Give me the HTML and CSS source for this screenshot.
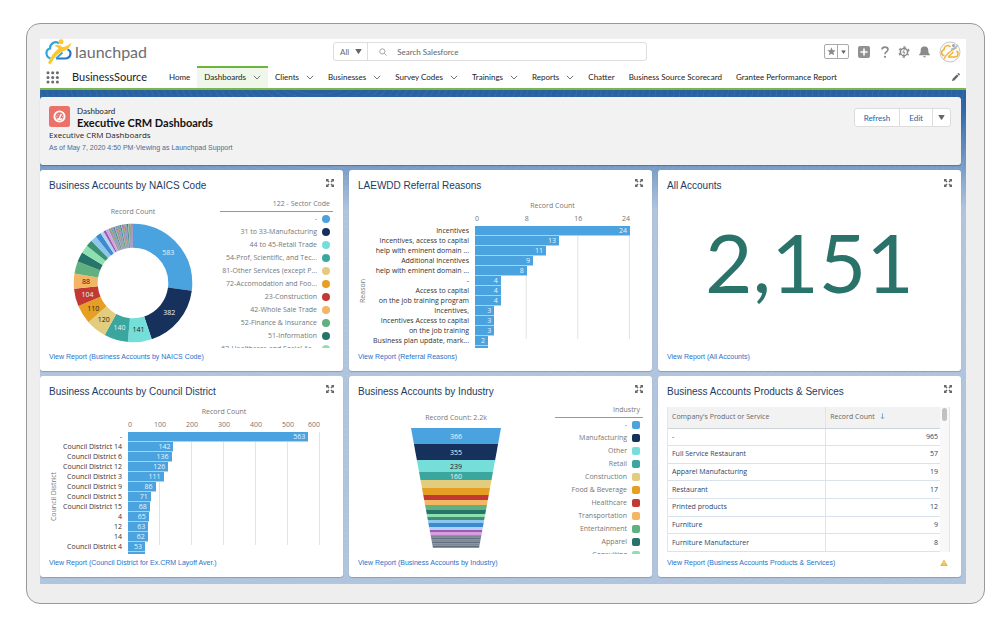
FILE: index.html
```html
<!DOCTYPE html>
<html lang="en">
<head>
<meta charset="utf-8">
<title>Executive CRM Dashboards</title>
<link rel="stylesheet" href="styles.css">
</head>
<body>
<svg class="defs" aria-hidden="true">
  <symbol id="chev" viewBox="0 0 8 5"><path d="M.8.8 4 4 7.2.8" fill="none" stroke="#777" stroke-width="1"/></symbol>
  <symbol id="caret" viewBox="0 0 8 6"><path d="M.8 0h6.4q.8 0 .4.7L4.6 5.3q-.6.8-1.2 0L.4.7Q0 0 .8 0z" fill="#666"/></symbol>
  <symbol id="expand" viewBox="0 0 8 8"><path d="M0 0h3L2.100.9 3.500 2.400 2.500 3.500.9 2 0 3zM8 0v3L7.100 2 5.500 3.500 4.500 2.400 5.900.9 5 0zM8 8H5l.9-.9L4.500 5.600l1-1.100L7.100 6 8 5zM0 8V5l.9 1 1.600-1.500 1 1.100L2.100 7.100 3 8z" fill="#666"/></symbol>
</svg>
<div class="device">
  <div class="screen">
    <header class="top">
      <div class="brand-bar">
        <a class="brand" href="#">
          <svg class="logo" viewBox="0 0 28 26" aria-hidden="true">
            <path d="M5.500 19.500C.2 18 .2 10.500 5 9.500 5 4 11 1.500 14 4.500" fill="none" stroke="#2fa4e0" stroke-width="2.200"/>
            <path d="M11 19.500h9c6.500-.3 7-7.500 2.500-9" fill="none" stroke="#2878be" stroke-width="2.200"/>
            <path d="M11 19.500 17.500 13.500" fill="none" stroke="#2fa4e0" stroke-width="1.800"/>
            <circle cx="16" cy="2.800" r="2.500" fill="#fdc82f"/>
            <path d="M9.500 6.500c3-1.500 5.500-.5 7.500 1.500 3 0 6-1.500 9.500-4.500-1 4.500-4 7.500-8.500 9C12.500 14.500 9 19 5.500 25.500L3 24C5.500 18 9 13 13.500 9.500c-1.500-1.500-2.500-2-4-3z" fill="#fdc82f"/>
          </svg>
          <span>launchpad</span>
        </a>
        <form class="search">
          <button class="scope" type="button">All <svg class="caret"><use href="#caret"/></svg></button>
          <label class="search-box">
            <svg class="lens" viewBox="0 0 9 9" aria-hidden="true"><circle cx="3.800" cy="3.800" r="2.900" fill="none" stroke="#999"/><path d="m6 6 2.500 2.500" stroke="#999"/></svg>
            <input type="text" placeholder="Search Salesforce" aria-label="Search Salesforce">
          </label>
        </form>
        <div class="tools">
          <div class="fav">
            <button type="button" aria-label="Favorite"><svg width="9" height="9" viewBox="0 0 10 10"><path d="m5 .3 1.300 3.200 3.400.2-2.600 2.200.8 3.400L5 7.500 2.100 9.300l.8-3.400L.3 3.700l3.400-.2z" fill="#8a8a8a"/></svg></button>
            <button type="button" aria-label="Favorites list"><svg width="5" height="4" viewBox="0 0 8 6"><use href="#caret"/></svg></button>
          </div>
          <button type="button" aria-label="Add"><svg width="12" height="12" viewBox="0 0 12 12"><rect width="12" height="12" rx="2" fill="#919191"/><path d="M6 2.500v7M2.500 6h7" stroke="#fff" stroke-width="1.600"/></svg></button>
          <button type="button" aria-label="Help"><svg width="10" height="12" viewBox="0 0 10 12"><path d="M3 3.500C3 .3 9 .3 9 3.500 9 5.500 6 5.800 6 8.200" fill="none" stroke="#8a8a8a" stroke-width="1.600"/><circle cx="6" cy="10.800" r="1.100" fill="#8a8a8a"/></svg></button>
          <button type="button" aria-label="Setup"><svg width="12" height="12" viewBox="0 0 12 12"><circle cx="6" cy="6" r="3.600" fill="none" stroke="#8a8a8a" stroke-width="1.500"/><circle cx="6" cy="6" r="4.900" fill="none" stroke="#8a8a8a" stroke-width="1.500" stroke-dasharray="2.300 2.830" stroke-dashoffset="1.150" transform="rotate(30 6 6)"/><path d="M6.500 3.500 4.800 6.300h2L5.700 8.500" fill="none" stroke="#8a8a8a" stroke-width=".9"/></svg></button>
          <button type="button" aria-label="Notifications"><svg width="11" height="12" viewBox="0 0 11 12"><path d="M5.500.5c3 0 3.800 2 3.800 4 0 2.200.5 3 1.500 3.700v1H.2v-1C1.200 7.500 1.700 6.700 1.700 4.500c0-2 .8-4 3.800-4zM4 10.200h3c-.3 1.600-2.700 1.600-3 0z" fill="#8a8a8a"/></svg></button>
          <button type="button" aria-label="Profile"><svg width="22" height="22" viewBox="0 0 22 22"><circle cx="11" cy="11" r="10" fill="#fbfaf7" stroke="#b9b9b9" stroke-width=".8"/><path d="M5.500 14.800C1.500 14 2 9.300 5 8.700 5 4.500 9.500 3.500 11.500 6M9 16h6.500c4 0 4.500-4.500 2-6" fill="none" stroke="#f3b234" stroke-width="1.500"/><path d="M5 18c2-5 5-7.500 12.500-11M9.500 15.500l5-4.500" fill="none" stroke="#f3b234" stroke-width="1.300"/><path d="M12 8.500c3-.5 5-2 7-4.500" fill="none" stroke="#a9b8c9" stroke-width="1.300"/><circle cx="14.500" cy="4.500" r="1.500" fill="#8fa6c2"/></svg></button>
        </div>
      </div>
      <nav class="nav">
        <button class="waffle" type="button" aria-label="App launcher"><svg width="14" height="13" viewBox="0 0 14 13" fill="#6b6b6b"><circle cx="2" cy="1.700" r="1.500"/><circle cx="6.700" cy="1.700" r="1.500"/><circle cx="11.400" cy="1.700" r="1.500"/><circle cx="2" cy="6.400" r="1.500"/><circle cx="6.700" cy="6.400" r="1.500"/><circle cx="11.400" cy="6.400" r="1.500"/><circle cx="2" cy="11.100" r="1.500"/><circle cx="6.700" cy="11.100" r="1.500"/><circle cx="11.400" cy="11.100" r="1.500"/></svg></button>
        <span class="app">BusinessSource</span>
        <a href="#">Home</a>
        <a class="on" href="#">Dashboards <svg class="chev"><use href="#chev"/></svg></a>
        <a href="#">Clients <svg class="chev"><use href="#chev"/></svg></a>
        <a href="#">Businesses <svg class="chev"><use href="#chev"/></svg></a>
        <a href="#">Survey Codes <svg class="chev"><use href="#chev"/></svg></a>
        <a href="#">Trainings <svg class="chev"><use href="#chev"/></svg></a>
        <a href="#">Reports <svg class="chev"><use href="#chev"/></svg></a>
        <a href="#">Chatter</a>
        <a href="#">Business Source Scorecard</a>
        <a href="#">Grantee Performance Report</a>
        <button class="pencil" type="button" aria-label="Edit navigation"><svg width="8" height="8" viewBox="0 0 8 8"><path d="M0 8 .6 5.700 4.900 1.400 6.600 3.100 2.300 7.400zM5.400.9l.6-.6q.5-.4 1 0l.7.7q.4.5 0 1l-.6.600z" fill="#666"/></svg></button>
      </nav>
    </header>

    <main class="stage">
      <section class="page-head">
        <div class="info">
          <div class="title-row">
            <svg class="dash-icon" viewBox="0 0 21 21" aria-hidden="true"><rect width="21" height="21" rx="2.500" fill="#ec7169"/><circle cx="10.500" cy="10.500" r="5.100" fill="none" stroke="#fff" stroke-width="1.900"/><path d="M7.500 12.300h6l-1.200 2h-3.600z" fill="#fff"/><path d="M10 12.800 12.300 8" stroke="#fff" stroke-width="1.500"/><path d="M7.300 10.300h1M8.800 8l.5.600M13 10.300h.9" stroke="#fff" stroke-width=".9"/></svg>
            <div>
              <p class="kind">Dashboard</p>
              <h1>Executive CRM Dashboards</h1>
            </div>
          </div>
          <p class="desc">Executive CRM Dashboards</p>
          <p class="asof">As of May 7, 2020 4:50 PM·Viewing as Launchpad Support</p>
        </div>
        <div class="actions">
          <button type="button">Refresh</button>
          <button type="button">Edit</button>
          <button type="button" aria-label="More actions"><svg class="caret"><use href="#caret"/></svg></button>
        </div>
      </section>

      <div class="cards">
        <article class="card">
          <header><h2>Business Accounts by NAICS Code</h2><button type="button" aria-label="Expand"><svg class="expand"><use href="#expand"/></svg></button></header>
          <div class="body split naics">
            <div class="figure">
              <p class="caption">Record Count</p>
              <svg id="donut" class="donut" viewBox="0 0 120 120"></svg>
            </div>
            <div class="legend dots" data-legend="naics"><h3>122 - Sector Code</h3></div>
          </div>
          <footer><a href="#">View Report (Business Accounts by NAICS Code)</a></footer>
        </article>

        <article class="card">
          <header><h2>LAEWDD Referral Reasons</h2><button type="button" aria-label="Expand"><svg class="expand"><use href="#expand"/></svg></button></header>
          <div class="body bars reasons" data-bars="reasons"></div>
          <footer><a href="#">View Report (Referral Reasons)</a></footer>
        </article>

        <article class="card">
          <header><h2>All Accounts</h2><button type="button" aria-label="Expand"><svg class="expand"><use href="#expand"/></svg></button></header>
          <div class="body metric">2,151</div>
          <footer><a href="#">View Report (All Accounts)</a></footer>
        </article>

        <article class="card">
          <header><h2>Business Accounts by Council District</h2><button type="button" aria-label="Expand"><svg class="expand"><use href="#expand"/></svg></button></header>
          <div class="body bars districts" data-bars="districts"></div>
          <footer><a href="#">View Report (Council District for Ex.CRM Layoff Aver.)</a></footer>
        </article>

        <article class="card">
          <header><h2>Business Accounts by Industry</h2><button type="button" aria-label="Expand"><svg class="expand"><use href="#expand"/></svg></button></header>
          <div class="body split industry">
            <div class="figure">
              <p class="caption">Record Count: 2.2k</p>
              <svg id="funnel" class="funnel" viewBox="0 0 90 120"></svg>
            </div>
            <div class="legend squares" data-legend="industry"><h3>Industry</h3></div>
          </div>
          <footer><a href="#">View Report (Business Accounts by Industry)</a></footer>
        </article>

        <article class="card">
          <header><h2>Business Accounts Products &amp; Services</h2><button type="button" aria-label="Expand"><svg class="expand"><use href="#expand"/></svg></button></header>
          <div class="body table-box">
            <table>
              <thead><tr><th>Company's Product or Service</th><th>Record Count <svg class="sort" viewBox="0 0 5 8"><path d="M2.500.5v6M.6 4.800l1.900 1.900 1.900-1.900" fill="none" stroke="#5f94c8" stroke-width=".9"/></svg></th></tr></thead>
              <tbody>
                <tr><td>-</td><td>965</td></tr>
                <tr><td>Full Service Restaurant</td><td>57</td></tr>
                <tr><td>Apparel Manufacturing</td><td>19</td></tr>
                <tr><td>Restaurant</td><td>17</td></tr>
                <tr><td>Printed products</td><td>12</td></tr>
                <tr><td>Furniture</td><td>9</td></tr>
                <tr><td>Furniture Manufacturer</td><td>8</td></tr>
              </tbody>
            </table>
            <div class="track"><div class="thumb"></div></div>
          </div>
          <footer><a href="#">View Report (Business Accounts Products &amp; Services)</a><svg class="warn" viewBox="0 0 8 8"><path d="M4 .5 7.800 7H.2z" fill="#f0b23c"/><path d="M4 2.800v2M4 5.400v.9" stroke="#fff" stroke-width=".8"/></svg></footer>
        </article>
      </div>
    </main>
  </div>
</div>
<script src="charts.js"></script>
</body>
</html>
```
FILE: styles.css
```css
* { box-sizing: border-box; }
body {
  margin: 0;
  padding: 23px 20px 31px 26px;
  background: #fff;
  color: #222;
  font: 8px/10px Lato, "Open Sans", sans-serif;
}
h1, h2, h3, p { margin: 0; font-weight: 400; }
a { color: inherit; text-decoration: none; }
button { margin: 0; padding: 0; border: 0; background: none; color: inherit; font: inherit; }
svg { display: block; }
.defs { position: absolute; width: 0; height: 0; }
.caret { width: 7px; height: 5px; }
.chev { width: 8px; height: 5px; }
.expand { width: 8px; height: 8px; }

.device {
  padding: 15px 18px 19px 13px;
  border: 1px solid #999;
  border-radius: 14px;
  background: #eee;
}
.top { background: #fff; border-bottom: 2px solid #7ab648; }
.brand-bar {
  display: flex;
  align-items: center;
  height: 27px;
  padding: 0 5px 2px;
}
.brand { display: flex; align-items: center; gap: 2px; width: 288px; }
.brand span { color: #6b6e72; font-size: 16px; line-height: 20px; }
.logo { width: 28px; height: 26px; }
.search {
  display: flex;
  flex: 0 1 314px;
  height: 19px;
  border: 1px solid #ddd;
  border-radius: 3px;
  color: #666;
}
.scope {
  display: flex;
  align-items: center;
  gap: 6px;
  padding: 0 5px 0 6px;
  border-right: 1px solid #ddd;
}
.search-box { display: flex; flex: 1; align-items: center; gap: 10px; padding-left: 11px; }
.lens { width: 8px; height: 8px; }
.search input { flex: 1; min-width: 0; padding: 0; border: 0; outline: 0; background: none; font: inherit; }
.search input::placeholder { color: #666; opacity: 1; }
.tools { display: flex; align-items: center; gap: 9px; margin-left: auto; }
.fav { display: flex; border: 1px solid #aaa; border-radius: 2px; }
.fav button { display: flex; align-items: center; justify-content: center; width: 12px; height: 13px; }
.fav button + button { width: 11px; border-left: 1px solid #aaa; }

.nav { display: flex; align-items: stretch; height: 22px; padding-left: 6px; line-height: 16px; color: #222; }
.nav a { display: flex; align-items: center; gap: 7px; padding: 0 7px 2px; border-top: 2px solid transparent; white-space: nowrap; }
.nav a.on { border-color: #6cb33f; background: #eff6ea; }
.app { width: 90px; margin-left: 12px; font-size: 11px; line-height: 22px; }
.waffle { display: flex; align-items: center; }
.pencil { margin: 0 6px 0 auto; }

.stage {
  padding: 7px 5px 7px 0;
  background:
    repeating-radial-gradient(ellipse at 30% -8%, transparent 0 5px, rgba(255,255,255,.05) 5px 6px),
    linear-gradient(#29609f 0, #2f69a8 20px, #b0c4de 120px);
}
.page-head {
  display: flex;
  justify-content: space-between;
  height: 68px;
  padding: 9px 10px 0 9px;
  border-radius: 3px;
  background: #f2f2f2;
  box-shadow: 0 1px 1px rgba(0,0,0,.25);
}
.title-row { display: flex; gap: 7px; }
.dash-icon { width: 21px; height: 21px; }
.kind { line-height: 11px; }
h1 { font-size: 11px; font-weight: 700; line-height: 12px; color: #111; }
.desc { font-family: "Open Sans", sans-serif; line-height: 11px; }
.asof { margin-top: 2px; color: #4a6a94; font: 7px/12px "Liberation Sans", sans-serif; }
.actions { display: flex; height: 19px; margin-top: 2px; border: 1px solid #ddd; border-radius: 3px; background: #fff; color: #2265a8; }
.actions button { display: flex; align-items: center; padding: 0 9px; }
.actions button + button { border-left: 1px solid #ddd; }
.actions button:last-child { padding: 0 5px; }

.cards { display: grid; grid-template-columns: repeat(3, minmax(0, 1fr)); gap: 5px 6px; margin-top: 5px; }
.card {
  padding: 9px 9px 0;
  border-radius: 3px;
  background: #fff;
  box-shadow: 0 1px 1px rgba(0,0,0,.2);
}
.card header { display: flex; justify-content: space-between; align-items: flex-start; height: 20px; }
h2 { color: #1c3c63; font: 10px/13px "Liberation Sans", sans-serif; }
.card footer { display: flex; justify-content: space-between; padding: 3px 4px 8px 0; color: #1f72cc; font: 7px/12px "Liberation Sans", sans-serif; }
.body { height: 149px; overflow: hidden; color: #333; font-family: "Open Sans", sans-serif; font-size: 7px; }
.warn { width: 8px; height: 8px; margin-top: 2px; }

.split { display: flex; justify-content: space-between; }
.figure { display: flex; flex-direction: column; align-items: center; }
.caption { color: #777; }
.naics .figure { padding: 8px 0 0 24px; }
.donut { width: 120px; height: 120px; margin-top: 6px; }
.naics .legend { width: 113px; margin-right: 1px; }
.industry .figure { padding: 8px 0 0 53px; }
.funnel { width: 90px; height: 120px; margin-top: 5px; }
.industry .legend { width: 88px; }
.chart-text { font-size: 7px; text-anchor: middle; dominant-baseline: central; }
.legend { color: #777; text-align: right; }
.legend h3 { padding: 0 3px 2px 0; border-bottom: 1px solid #999; font-size: 7px; line-height: 10px; }
.legend p { display: flex; align-items: center; justify-content: flex-end; gap: 5px; height: 13px; padding-right: 3px; white-space: nowrap; }
.legend i { width: 8px; height: 8px; border-radius: 2px; }
.dots i { border-radius: 50%; }

.bars { display: grid; grid-template-rows: 15px 12px 1fr; line-height: 10px; }
.reasons { grid-template-columns: 10px 107px 1fr; padding-right: 13px; }
.districts { grid-template-columns: 10px 69px 1fr; padding-right: 14px; }
.axis-name { grid-column: 3; padding-top: 2px; color: #777; text-align: center; }
.ticks { grid-column: 3; grid-row: 2; display: flex; color: #777; }
.ticks span { flex: 2 0 0; min-width: 0; text-align: center; }
.ticks span:first-child { flex-grow: 1; text-align: left; }
.ticks span:last-child { display: flex; flex-grow: 1; justify-content: flex-end; }
.side { grid-column: 1; grid-row: 3; align-self: center; writing-mode: vertical-rl; transform: rotate(180deg); color: #777; white-space: nowrap; }
.names { grid-column: 2; grid-row: 3; padding-right: 6px; text-align: right; white-space: nowrap; }
.names div { height: 10px; }
.plot { grid-column: 3; grid-row: 3; }
.bar { height: 10px; padding-right: 3px; border-bottom: 1px solid #a8d4f2; background: #4aa3df; color: #e6f3fc; text-align: right; }
.reasons .plot { background: linear-gradient(90deg, transparent calc(100% - 1px), #e2e2e2 0) 0 0 / 33.33% 113px repeat-x; }
.districts .plot { background: linear-gradient(90deg, transparent calc(100% - 1px), #e2e2e2 0) 0 0 / 16.66% 113px repeat-x; }

.metric { display: flex; align-items: center; justify-content: center; padding-bottom: 26px; color: #29736b; font-family: Lato, sans-serif; font-size: 82px; }

.table-box { display: flex; height: 145px; margin-top: 2px; margin-bottom: 2px; border-left: 1px solid #e6e6e6; color: #27456b; }
table { flex: 1; height: 145px; border-collapse: collapse; }
th, td { padding: 0 4px; border-bottom: 1px solid #d8e3ee; text-align: left; font-weight: 400; line-height: 10px; }
th { height: 21px; background: #f2f2f2; border-color: #ccd3da; color: #666; }
th:first-child, td:first-child { width: 58%; border-right: 1px solid #dce5ee; }
td:last-child { padding-right: 2px; text-align: right; }
.sort { display: inline-block; width: 5px; height: 7px; margin-left: 3px; vertical-align: -1px; }
.track { width: 10px; margin-right: 2px; padding: 1px 2px; border-right: 1px solid #e6e6e6; background: #f8f8f8; }
.thumb { height: 13px; border-radius: 3px; background: #c1c1c1; }
```
FILE: charts.js
```js
const palette = ['#4aa3df', '#16325c', '#76ded9', '#3ba69d', '#e2cc7e', '#e69f23', '#c23934', '#f3b664', '#60b17f', '#26746a',
  '#8fe0b0', '#3c9173', '#8ec6f0', '#3d8bcf', '#b5d0f5', '#9a5cb0', '#d79de0'];
const svgNS = 'http://www.w3.org/2000/svg';

function add(parent, name, attrs, text) {
  const el = document.createElementNS(svgNS, name);
  for (const key in attrs) el.setAttribute(key, attrs[key]);
  if (text !== undefined) el.textContent = text;
  parent.appendChild(el);
}

// Donut: slices in record counts, the long tail as thin slices.
const accounts = [583, 382, 141, 140, 120, 110, 104, 88, 72, 58, 48, 38, 36, 33, 20, 14, 14];
const accountsTotal = 2151;
let rest = accountsTotal - accounts.reduce((a, b) => a + b);
while (rest > 0) { const n = Math.min(rest, 5); accounts.push(n); rest -= n; }
const tail = ['#2d5f75', '#7cc4a0', '#a06ab8', '#5a8f8a', '#c08a50', '#4a86b8', '#9b7cc0', '#5ca08a'];
const donut = document.getElementById('donut');
let start = 0;
accounts.forEach((n, i) => {
  const color = i < palette.length ? palette[i] : tail[i % tail.length];
  add(donut, 'circle', { cx: 60, cy: 60, r: 47.3, fill: 'none', stroke: color, 'stroke-width': 24, pathLength: accountsTotal,
    'stroke-dasharray': `${n} ${accountsTotal - n}`, 'stroke-dashoffset': -start, transform: 'rotate(-90 60 60)' });
  start += n;
});
start = 0;
accounts.slice(0, 8).forEach((n, i) => {
  const angle = (start + n / 2) / accountsTotal * 2 * Math.PI;
  add(donut, 'text', { class: 'chart-text', x: 60 + 47 * Math.sin(angle), y: 60 - 47 * Math.cos(angle),
    fill: [0, 1, 3, 6].includes(i) ? '#e6f3fc' : '#222' }, n);
  start += n;
});

// Funnel: band heights in units of the view box.
const bands = [16, 16, 12, 8, 8, 7, 5, 5, 5, 4, 3, 3, 3, 4, 3, 2, 3];
while (bands.reduce((a, b) => a + b) < 120) bands.push(1);
const funnel = document.getElementById('funnel');
const labels = [366, 355, 239, 160];
let y = 0;
bands.forEach((h, i) => {
  const a = y * 0.183, b = (y + h) * 0.183;
  const color = i < palette.length ? palette[i] : ['#5f6f80', '#8c9a8e', '#7d8794', '#94889c'][i % 4];
  add(funnel, 'path', { d: `M${a} ${y}H${90 - a}L${90 - b} ${y + h}H${b}z`, fill: color });
  if (i < labels.length) add(funnel, 'text', { class: 'chart-text', x: 45, y: y + h / 2, fill: i === 2 ? '#222' : '#e6f3fc' }, labels[i]);
  y += h;
});

const legends = {
  naics: ['-', '31 to 33-Manufacturing', '44 to 45-Retail Trade', '54-Prof, Scientific, and Tec...', '81-Other Services (except P...',
    '72-Accomodation and Foo...', '23-Construction', '42-Whole Sale Trade', '52-Finance & Insurance', '51-Information', '62-Healthcare and Social As...'],
  industry: ['-', 'Manufacturing', 'Other', 'Retail', 'Construction', 'Food & Beverage', 'Healthcare', 'Transportation',
    'Entertainment', 'Apparel', 'Consulting']
};
document.querySelectorAll('[data-legend]').forEach(box => {
  legends[box.dataset.legend].forEach((name, i) => {
    const row = document.createElement('p');
    row.textContent = name;
    const swatch = document.createElement('i');
    swatch.style.background = palette[i];
    row.appendChild(swatch);
    box.appendChild(row);
  });
});

const bars = {
  reasons: { side: 'Reason', max: 24, ticks: [0, 8, 16, 24], rows: [['Incentives', 24], ['Incentives, access to capital', 13],
    ['help with eminent domain ...', 11], ['Additional Incentives', 9], ['help with eminent domain ...', 8], ['-', 4],
    ['Access to capital', 4], ['on the job training program', 4], ['Incentives,', 3], ['Incentives Access to capital', 3],
    ['on the job training', 3], ['Business plan update, mark...', 2], ['', 2]] },
  districts: { side: 'Council District', max: 600, ticks: [0, 100, 200, 300, 400, 500, 600], rows: [['-', 563],
    ['Council District 14', 142], ['Council District 6', 136], ['Council District 12', 126], ['Council District 3', 111],
    ['Council District 9', 86], ['Council District 5', 71], ['Council District 15', 68], ['4', 65], ['12', 63], ['14', 62],
    ['Council District 4', 53], ['', 52]] }
};
document.querySelectorAll('[data-bars]').forEach(box => {
  const c = bars[box.dataset.bars];
  box.innerHTML = `<div class="axis-name">Record Count</div>
    <div class="ticks">${c.ticks.map(t => `<span>${t}</span>`).join('')}</div>
    <div class="side">${c.side}</div>
    <div class="names">${c.rows.map(r => `<div>${r[0]}</div>`).join('')}</div>
    <div class="plot">${c.rows.map(r => `<div class="bar" style="width:${r[1] / c.max * 100}%">${r[0] ? r[1] : ''}</div>`).join('')}</div>`;
});
```
